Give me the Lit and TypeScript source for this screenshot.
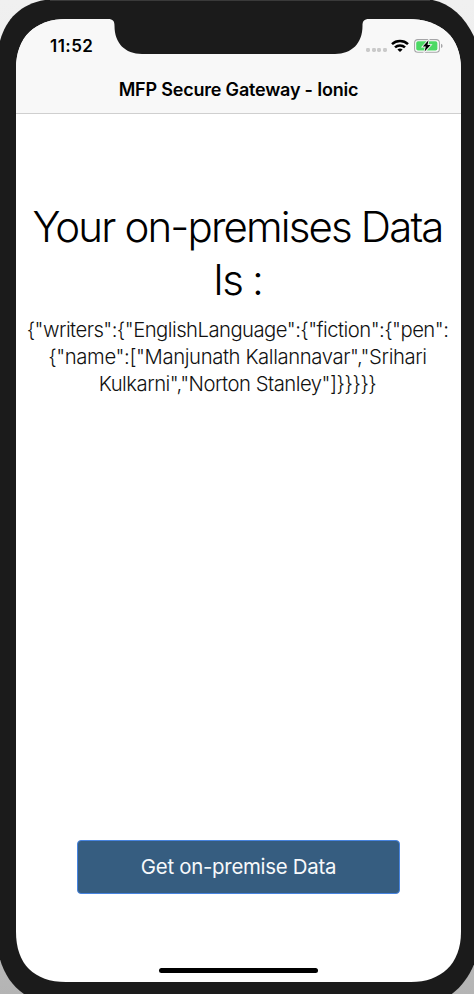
import { LitElement, html, css, svg } from "lit";
import { customElement } from "lit/decorators.js";

const wifi = svg`<svg class="wifi" width="18" height="14" viewBox="0 0 18 14">
  <g fill="none" stroke="#000" stroke-width="2.5">
    <path d="M1 5.2C5.4 1 12.6 1 17 5.2" />
    <path d="M4 8.4C6.8 5.7 11.2 5.7 14 8.4" />
  </g>
  <path d="M6.4 10.6Q9 8.5 11.6 10.6L9 13.1Z" />
</svg>`;

const battery = svg`<svg class="battery" width="29" height="14" viewBox="0 0 29 14">
  <rect x=".6" y=".6" width="24.8" height="12.6" rx="3.3" fill="#fff" stroke="#a5a5a7" stroke-width="1.1" />
  <rect x="2.2" y="2.2" width="21.2" height="9.4" rx="1.8" fill="#4cd964" />
  <path d="M27 4.7Q28.6 5.3 28.6 6.9T27 9.1Z" fill="#a5a5a7" />
  <path d="M14.5 1.3L8.8 7.6H11.8L10.6 12.6L16.6 6.1H13.5Z" stroke="#f8f8f8" stroke-width="1.7" />
  <path d="M14.5 1.3L8.8 7.6H11.8L10.6 12.6L16.6 6.1H13.5Z" />
</svg>`;

@customElement("app-root")
export class AppRoot extends LitElement {
  static styles = css`
    :host {
      display: block;
      position: relative;
      width: 474px;
      height: 994px;
      overflow: hidden;
      background: linear-gradient(#f0f0f0, #e4e4e4 50%, #b4b4b4);
      font-family: Inter, "Liberation Sans", sans-serif;
      color: #000;
    }
    .bezel {
      position: absolute;
      inset: 0;
      display: block;
    }
    .phone {
      position: relative;
      box-sizing: border-box;
      height: 994px;
      padding: 19px 13px 12px 16px;
      display: flex;
      flex-direction: column;
    }
    .status {
      height: 54px;
      box-sizing: border-box;
      padding: 0 18px 0 34px;
      display: flex;
      justify-content: space-between;
    }
    .time {
      font-size: 17px;
      font-weight: 600;
      line-height: 54px;
      letter-spacing: 0.45px;
    }
    .signals {
      display: flex;
      align-items: center;
      height: 53px;
    }
    .dots {
      display: flex;
      gap: 1.5px;
      margin: 9px 4.5px 0 0;
    }
    .dot {
      width: 4px;
      height: 4px;
      border-radius: 1.4px;
      background: #cacaca;
    }
    .wifi {
      margin-right: 5px;
    }
    .title {
      height: 41px;
      box-sizing: border-box;
      border-bottom: 1px solid #cfcfcf;
      font-size: 18px;
      font-weight: 600;
      line-height: 33px;
      letter-spacing: -0.2px;
      text-align: center;
      white-space: nowrap;
    }
    .content {
      flex: 1;
      display: flex;
      flex-direction: column;
      align-items: center;
      text-align: center;
    }
    h1 {
      margin: 86px 2px 0 0;
      font-size: 42px;
      font-weight: 300;
      line-height: 53px;
      letter-spacing: -1.85px;
      white-space: nowrap;
    }
    .data {
      margin: 10px 2px 0 0;
      font-size: 20.3px;
      font-weight: 300;
      line-height: 27px;
      letter-spacing: -0.4px;
      white-space: nowrap;
      color: #111;
    }
    .lead {
      letter-spacing: -0.54px;
    }
    .tail {
      letter-spacing: -0.5px;
    }
    button {
      margin: auto 0 74px;
      width: 323px;
      height: 54px;
      padding: 0;
      border: 1px solid #4784e0;
      border-radius: 4px;
      background: #365d80;
      color: #f7f9fb;
      font: 400 20.4px/52px Inter, "Liberation Sans", sans-serif;
      letter-spacing: -0.27px;
    }
    .home {
      width: 159px;
      height: 5px;
      border-radius: 3px;
      background: #000;
      margin-bottom: 9px;
    }
  `;

  render() {
    return html`
      <svg class="bezel" width="474" height="994" viewBox="0 0 474 994">
        <path d="M-3 60C-1 24 18 0 56 -1H424C451 0 470 20 480 52V940C477 968 462 992 438 1002H40C14 993 1 973 -3 945Z" fill="#1b1b1b" />
        <path d="M50 .5H430" stroke="#3a3a3a" />
        <path d="M16 69C16 37 35 19 67 19H407C441 19 461 37 461 69V932C461 964 441 982 411 982H66C34 982 16 964 16 932Z" fill="#fff" />
        <path d="M16 113V69C16 37 35 19 67 19H108C113 19 114.5 21 114.5 26C114.5 43 125 54 142 54H335C352 54 362.5 43 362.5 26C362.5 21 364 19 369 19H407C441 19 461 37 461 69V113Z" fill="#f8f8f8" />
        <path d="M67 19H108C113 19 114.5 21 114.5 26C114.5 43 125 54 142 54H335C352 54 362.5 43 362.5 26C362.5 21 364 19 369 19Z" fill="#1b1b1b" />
      </svg>
      <div class="phone">
        <div class="status">
          <span class="time">11:52</span>
          <div class="signals">
            <div class="dots">${[0, 1, 2, 3].map(() => html`<i class="dot"></i>`)}</div>
            ${wifi}${battery}
          </div>
        </div>
        <div class="title">MFP Secure Gateway - Ionic</div>
        <main class="content">
          <h1>Your on-premises Data<br />Is :</h1>
          <p class="data"><span class="lead">{"writers":{"EnglishLanguage":{"fiction":{"pen":</span><br />{"name":["Manjunath Kallannavar","Srihari<br /><span class="tail">Kulkarni","Norton Stanley"]}}}}}</span></p>
          <button>Get on-premise Data</button>
          <div class="home"></div>
        </main>
      </div>
    `;
  }
}
